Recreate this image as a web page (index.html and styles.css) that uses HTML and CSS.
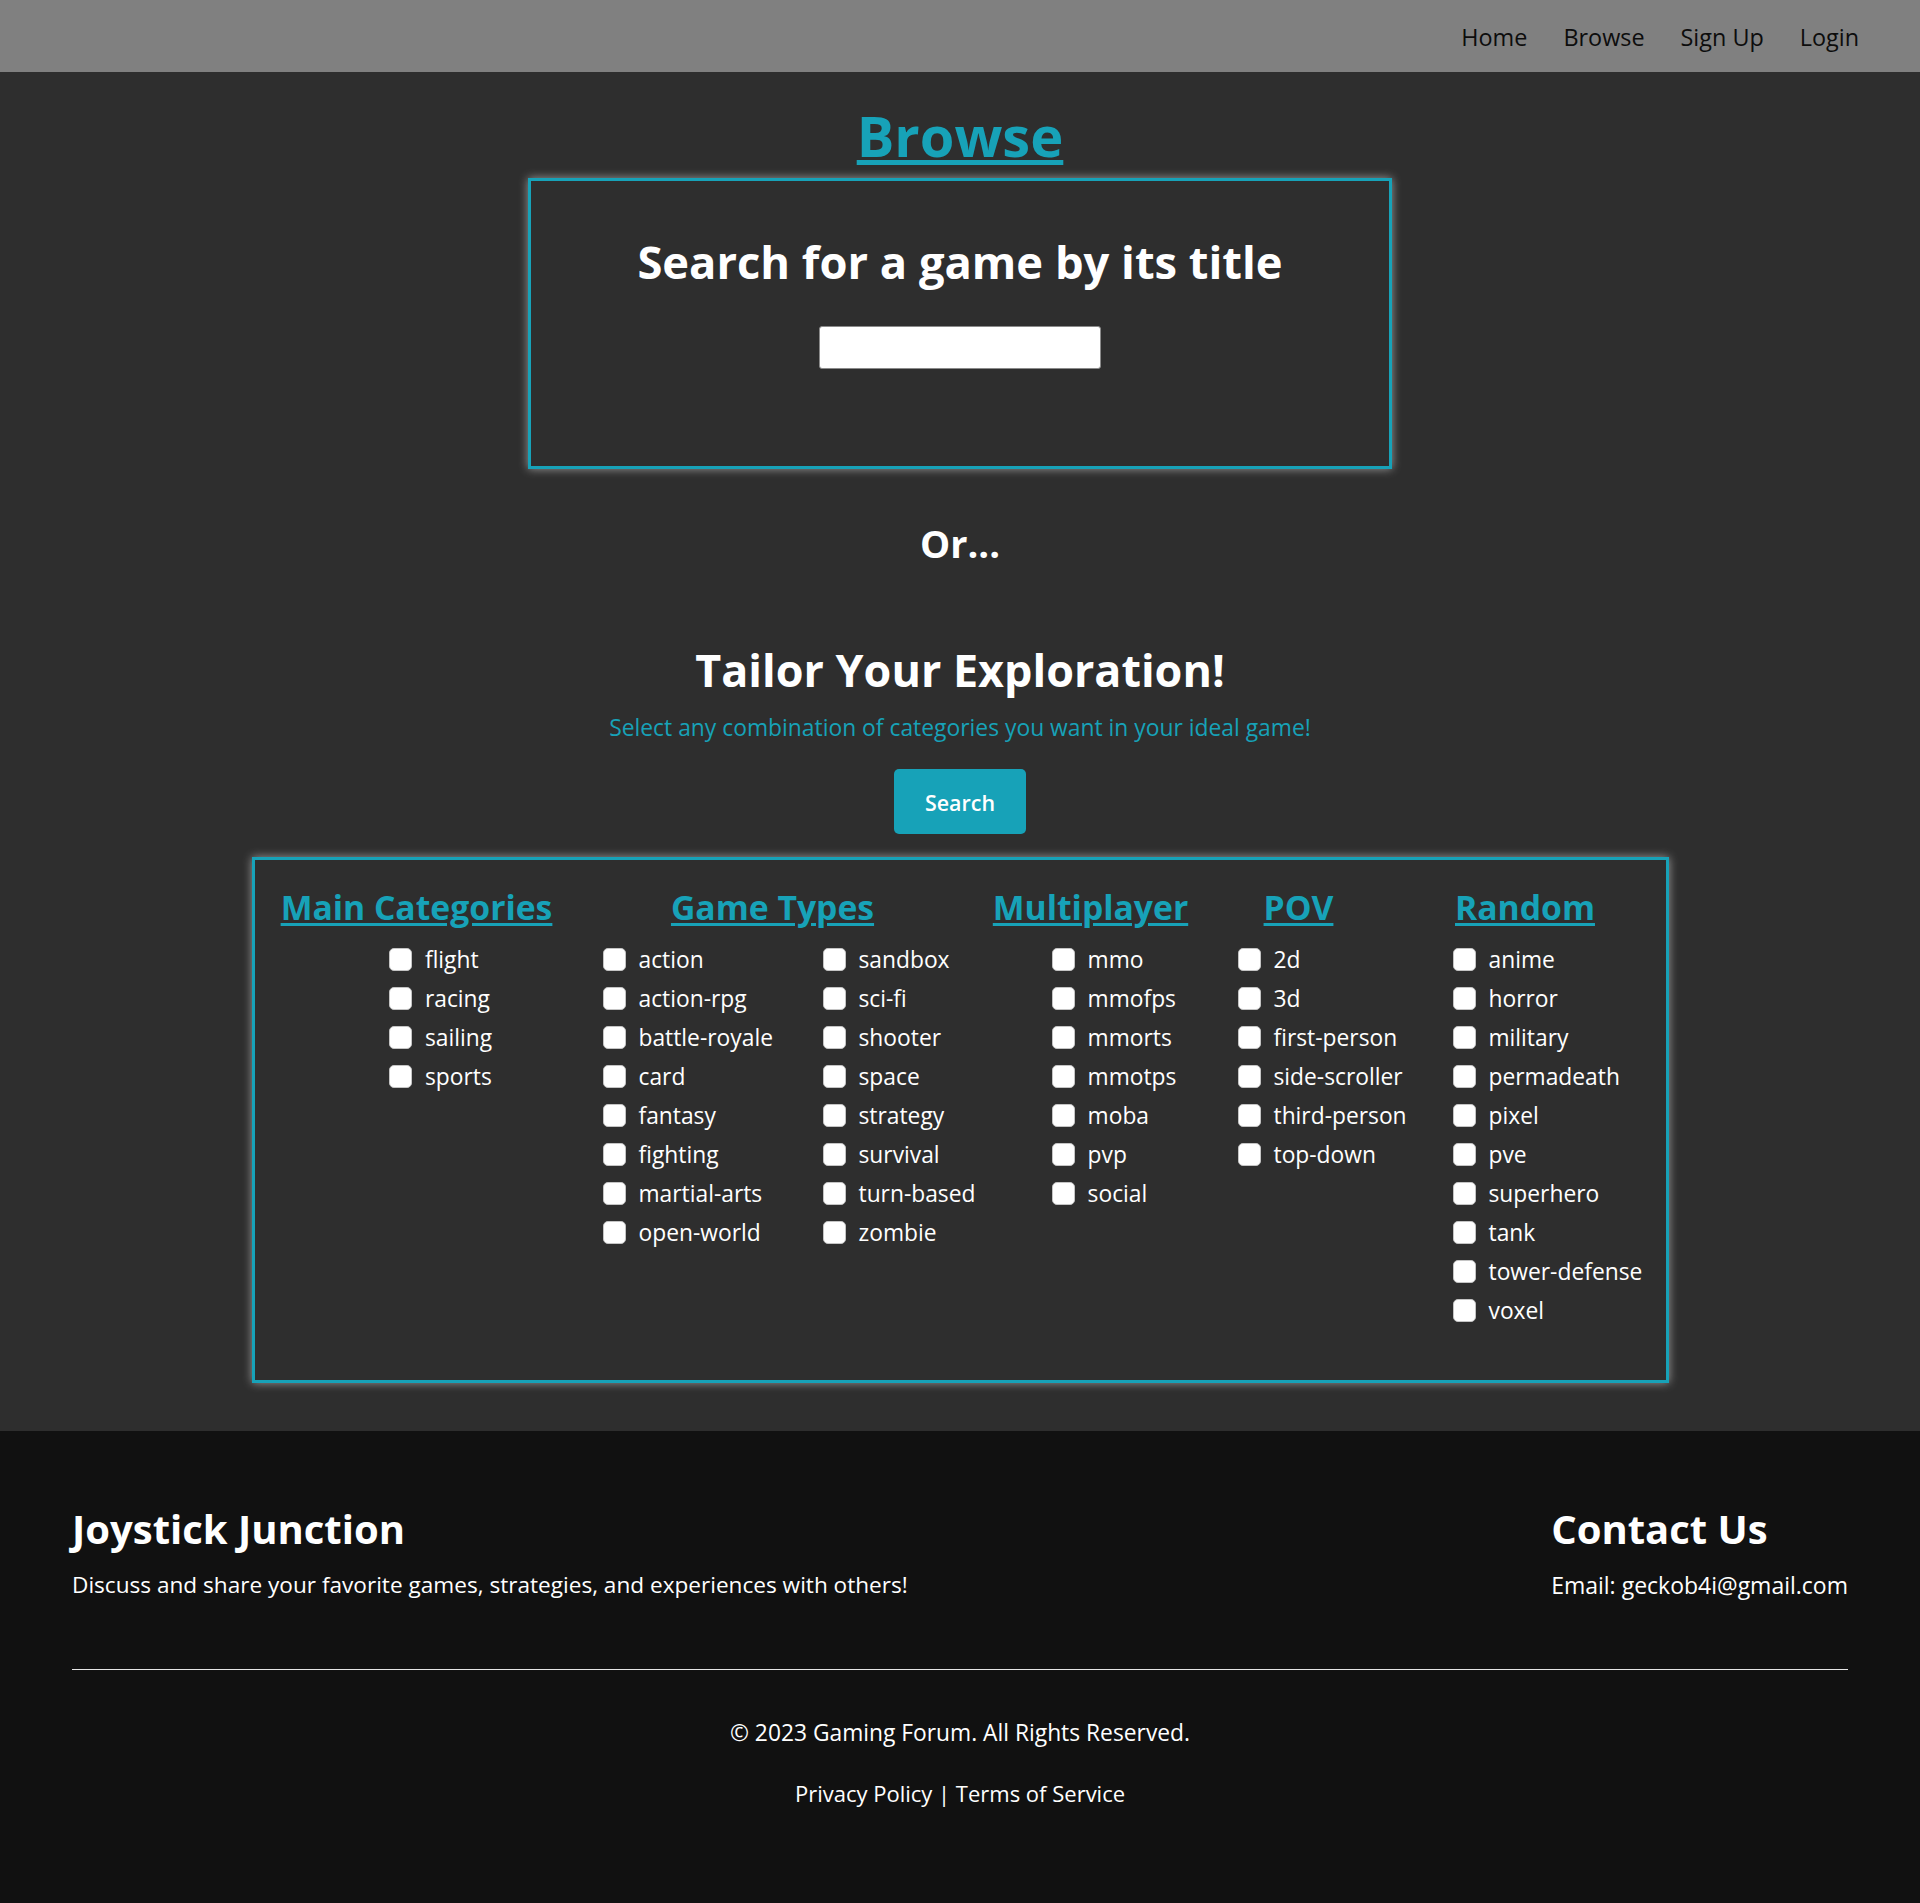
FILE: index.html
```html
<!DOCTYPE html>
<html lang="en">
<head>
<meta charset="utf-8">
<title>Browse - Joystick Junction</title>
<link rel="stylesheet" href="styles.css">
</head>
<body>
<nav class="topnav">
  <a href="#" class="nav-link">Home</a>
  <a href="#" class="nav-link">Browse</a>
  <a href="#" class="nav-link">Sign Up</a>
  <a href="#" class="nav-link">Login</a>
</nav>

<main class="page">
  <h1 class="page-title"><a href="#">Browse</a></h1>

  <section class="title-search">
    <h2 class="title-search-heading">Search for a game by its title</h2>
    <input type="text" class="title-input" aria-label="Game title">
  </section>

  <p class="or-text">Or...</p>

  <h2 class="tailor-heading">Tailor Your Exploration!</h2>
  <p class="tailor-sub">Select any combination of categories you want in your ideal game!</p>
  <button class="search-btn" type="button">Search</button>

  <section class="cat-box">
    <div class="cat-col col-main">
      <h3 class="cat-heading"><a href="#">Main Categories</a></h3>
      <ul class="cat-list">
        <li><input type="checkbox" class="cb"><span>flight</span></li>
        <li><input type="checkbox" class="cb"><span>racing</span></li>
        <li><input type="checkbox" class="cb"><span>sailing</span></li>
        <li><input type="checkbox" class="cb"><span>sports</span></li>
      </ul>
    </div>

    <div class="cat-col col-types">
      <h3 class="cat-heading"><a href="#">Game Types</a></h3>
      <ul class="cat-list cat-list-two">
        <li><input type="checkbox" class="cb"><span>action</span></li>
        <li><input type="checkbox" class="cb"><span>action-rpg</span></li>
        <li><input type="checkbox" class="cb"><span>battle-royale</span></li>
        <li><input type="checkbox" class="cb"><span>card</span></li>
        <li><input type="checkbox" class="cb"><span>fantasy</span></li>
        <li><input type="checkbox" class="cb"><span>fighting</span></li>
        <li><input type="checkbox" class="cb"><span>martial-arts</span></li>
        <li><input type="checkbox" class="cb"><span>open-world</span></li>
        <li><input type="checkbox" class="cb"><span>sandbox</span></li>
        <li><input type="checkbox" class="cb"><span>sci-fi</span></li>
        <li><input type="checkbox" class="cb"><span>shooter</span></li>
        <li><input type="checkbox" class="cb"><span>space</span></li>
        <li><input type="checkbox" class="cb"><span>strategy</span></li>
        <li><input type="checkbox" class="cb"><span>survival</span></li>
        <li><input type="checkbox" class="cb"><span>turn-based</span></li>
        <li><input type="checkbox" class="cb"><span>zombie</span></li>
      </ul>
    </div>

    <div class="cat-col col-multi">
      <h3 class="cat-heading"><a href="#">Multiplayer</a></h3>
      <ul class="cat-list">
        <li><input type="checkbox" class="cb"><span>mmo</span></li>
        <li><input type="checkbox" class="cb"><span>mmofps</span></li>
        <li><input type="checkbox" class="cb"><span>mmorts</span></li>
        <li><input type="checkbox" class="cb"><span>mmotps</span></li>
        <li><input type="checkbox" class="cb"><span>moba</span></li>
        <li><input type="checkbox" class="cb"><span>pvp</span></li>
        <li><input type="checkbox" class="cb"><span>social</span></li>
      </ul>
    </div>

    <div class="cat-col col-pov">
      <h3 class="cat-heading"><a href="#">POV</a></h3>
      <ul class="cat-list">
        <li><input type="checkbox" class="cb"><span>2d</span></li>
        <li><input type="checkbox" class="cb"><span>3d</span></li>
        <li><input type="checkbox" class="cb"><span>first-person</span></li>
        <li><input type="checkbox" class="cb"><span>side-scroller</span></li>
        <li><input type="checkbox" class="cb"><span>third-person</span></li>
        <li><input type="checkbox" class="cb"><span>top-down</span></li>
      </ul>
    </div>

    <div class="cat-col col-random">
      <h3 class="cat-heading"><a href="#">Random</a></h3>
      <ul class="cat-list">
        <li><input type="checkbox" class="cb"><span>anime</span></li>
        <li><input type="checkbox" class="cb"><span>horror</span></li>
        <li><input type="checkbox" class="cb"><span>military</span></li>
        <li><input type="checkbox" class="cb"><span>permadeath</span></li>
        <li><input type="checkbox" class="cb"><span>pixel</span></li>
        <li><input type="checkbox" class="cb"><span>pve</span></li>
        <li><input type="checkbox" class="cb"><span>superhero</span></li>
        <li><input type="checkbox" class="cb"><span>tank</span></li>
        <li><input type="checkbox" class="cb"><span>tower-defense</span></li>
        <li><input type="checkbox" class="cb"><span>voxel</span></li>
      </ul>
    </div>
  </section>
</main>

<footer class="site-footer">
  <div class="footer-top">
    <div class="footer-about">
      <h3 class="footer-heading">Joystick Junction</h3>
      <p class="footer-text">Discuss and share your favorite games, strategies, and experiences with others!</p>
    </div>
    <div class="footer-contact">
      <h3 class="footer-heading">Contact Us</h3>
      <p class="footer-text">Email: geckob4i@gmail.com</p>
    </div>
  </div>
  <hr class="footer-rule">
  <p class="footer-copy">© 2023 Gaming Forum. All Rights Reserved.</p>
  <p class="footer-links"><a href="#">Privacy Policy</a> | <a href="#">Terms of Service</a></p>
</footer>
</body>
</html>
```
FILE: styles.css
```css
* { box-sizing: border-box; }

html, body {
  margin: 0;
  padding: 0;
}

body {
  font-family: "Open Sans", "Noto Sans", Arial, sans-serif;
  background: #2e2e2e;
  color: #fff;
}

a { color: inherit; }

/* ---------- top navigation ---------- */
.topnav {
  height: 72px;
  background: #808080;
  display: flex;
  justify-content: flex-end;
  align-items: center;
  gap: 36px;
  padding: 1px 61px 0 0;
}

.nav-link {
  font-size: 23.4px;
  line-height: 30px;
  color: #0d0d0d;
  text-decoration: none;
}

/* ---------- main ---------- */
.page {
  padding: 31px 0 48px;
  text-align: center;
}

.page-title {
  margin: 0 0 11px;
  font-size: 56px;
  line-height: 64px;
  font-weight: 700;
  color: #17a2b8;
}

.page-title a {
  text-decoration: underline;
  text-decoration-thickness: 5px;
  text-underline-offset: 3px;
}

.title-search {
  width: 45%;
  margin: 0 auto;
  border: 3px solid #17a2b8;
  box-shadow: 0 0 9px rgba(190, 190, 190, 0.75);
  padding: 53px 20px 97px;
}

.title-search-heading {
  margin: 0 0 36px;
  font-size: 45.3px;
  line-height: 56px;
  font-weight: 700;
}

.title-input {
  display: block;
  margin: 0 auto;
  width: 282px;
  height: 43px;
  background: #fff;
  border: 1px solid #8a8a8a;
  border-radius: 3px;
}

.or-text {
  margin: 49px 0 0;
  font-size: 38px;
  line-height: 50px;
  font-weight: 700;
}

.tailor-heading {
  margin: 74px 0 0;
  font-size: 44.9px;
  line-height: 56px;
  font-weight: 700;
}

.tailor-sub {
  margin: 15px 0 0;
  font-size: 22.85px;
  line-height: 30px;
  color: #17a2b8;
}

.search-btn {
  display: block;
  margin: 26px auto 0;
  padding: 19px 31px 16px;
  font-family: inherit;
  font-size: 21.4px;
  line-height: 30px;
  font-weight: 600;
  color: #fff;
  background: #17a2b8;
  border: none;
  border-radius: 5px;
}

/* ---------- category picker ---------- */
.cat-box {
  display: flex;
  align-items: flex-start;
  width: fit-content;
  margin: 23px auto 0;
  padding: 25px 24px 50px 25px;
  border: 3px solid #17a2b8;
  box-shadow: 0 0 9px rgba(190, 190, 190, 0.75);
  text-align: left;
}

.cat-col {
  display: flex;
  flex-direction: column;
  align-items: center;
}

.col-main { width: 274px; }
.col-types { width: 428px; margin-left: 5px; }
.col-multi { width: 194px; margin-left: 7px; }
.col-pov { width: 210px; margin-left: 6px; }
.col-random { width: 233px; margin-left: 5px; }

.cat-heading {
  margin: 0 0 11px;
  font-size: 33.7px;
  line-height: 44px;
  font-weight: 700;
  color: #17a2b8;
  white-space: nowrap;
}

.cat-heading a {
  text-decoration: underline;
  text-decoration-thickness: 3px;
  text-underline-offset: 3px;
}

.cat-list {
  list-style: none;
  margin: 0;
  padding: 0 0 0 40px;
}

.col-main .cat-list {
  margin-left: 4px;
}

.col-multi .cat-list {
  margin-left: 3px;
}

.col-types .cat-list,
.col-pov .cat-list,
.col-random .cat-list {
  align-self: stretch;
}

.cat-list-two {
  display: grid;
  grid-template-columns: 220px auto;
  grid-template-rows: repeat(8, 39px);
  grid-auto-flow: column;
}

.cat-list li {
  display: flex;
  align-items: center;
  height: 39px;
  font-size: 22.8px;
  line-height: 30px;
  white-space: nowrap;
}

.cb {
  appearance: none;
  -webkit-appearance: none;
  flex: none;
  width: 23px;
  height: 23px;
  margin: 0 13px 0 4px;
  background: #fff;
  border: 1px solid #c4c4c4;
  border-radius: 5px;
}

/* ---------- footer ---------- */
.site-footer {
  background: #111;
  color: #fff;
  padding: 72px 72px 97px;
}

.footer-top {
  display: flex;
  justify-content: space-between;
}

.footer-heading {
  margin: 0;
  font-size: 40px;
  line-height: 52px;
  font-weight: 700;
}

.footer-text {
  margin: 15px 0 0;
  font-size: 22.6px;
  line-height: 30px;
}

.footer-contact .footer-text {
  font-size: 23px;
}

.footer-rule {
  margin: 69px 0 0;
  border: none;
  border-top: 1px solid #e6e6e6;
  height: 0;
}

.footer-copy {
  margin: 48px 0 0;
  text-align: center;
  font-size: 22.8px;
  line-height: 30px;
}

.footer-links {
  margin: 30px 0 0;
  text-align: center;
  font-size: 22px;
  line-height: 30px;
}

.footer-links a {
  text-decoration: none;
}
```
